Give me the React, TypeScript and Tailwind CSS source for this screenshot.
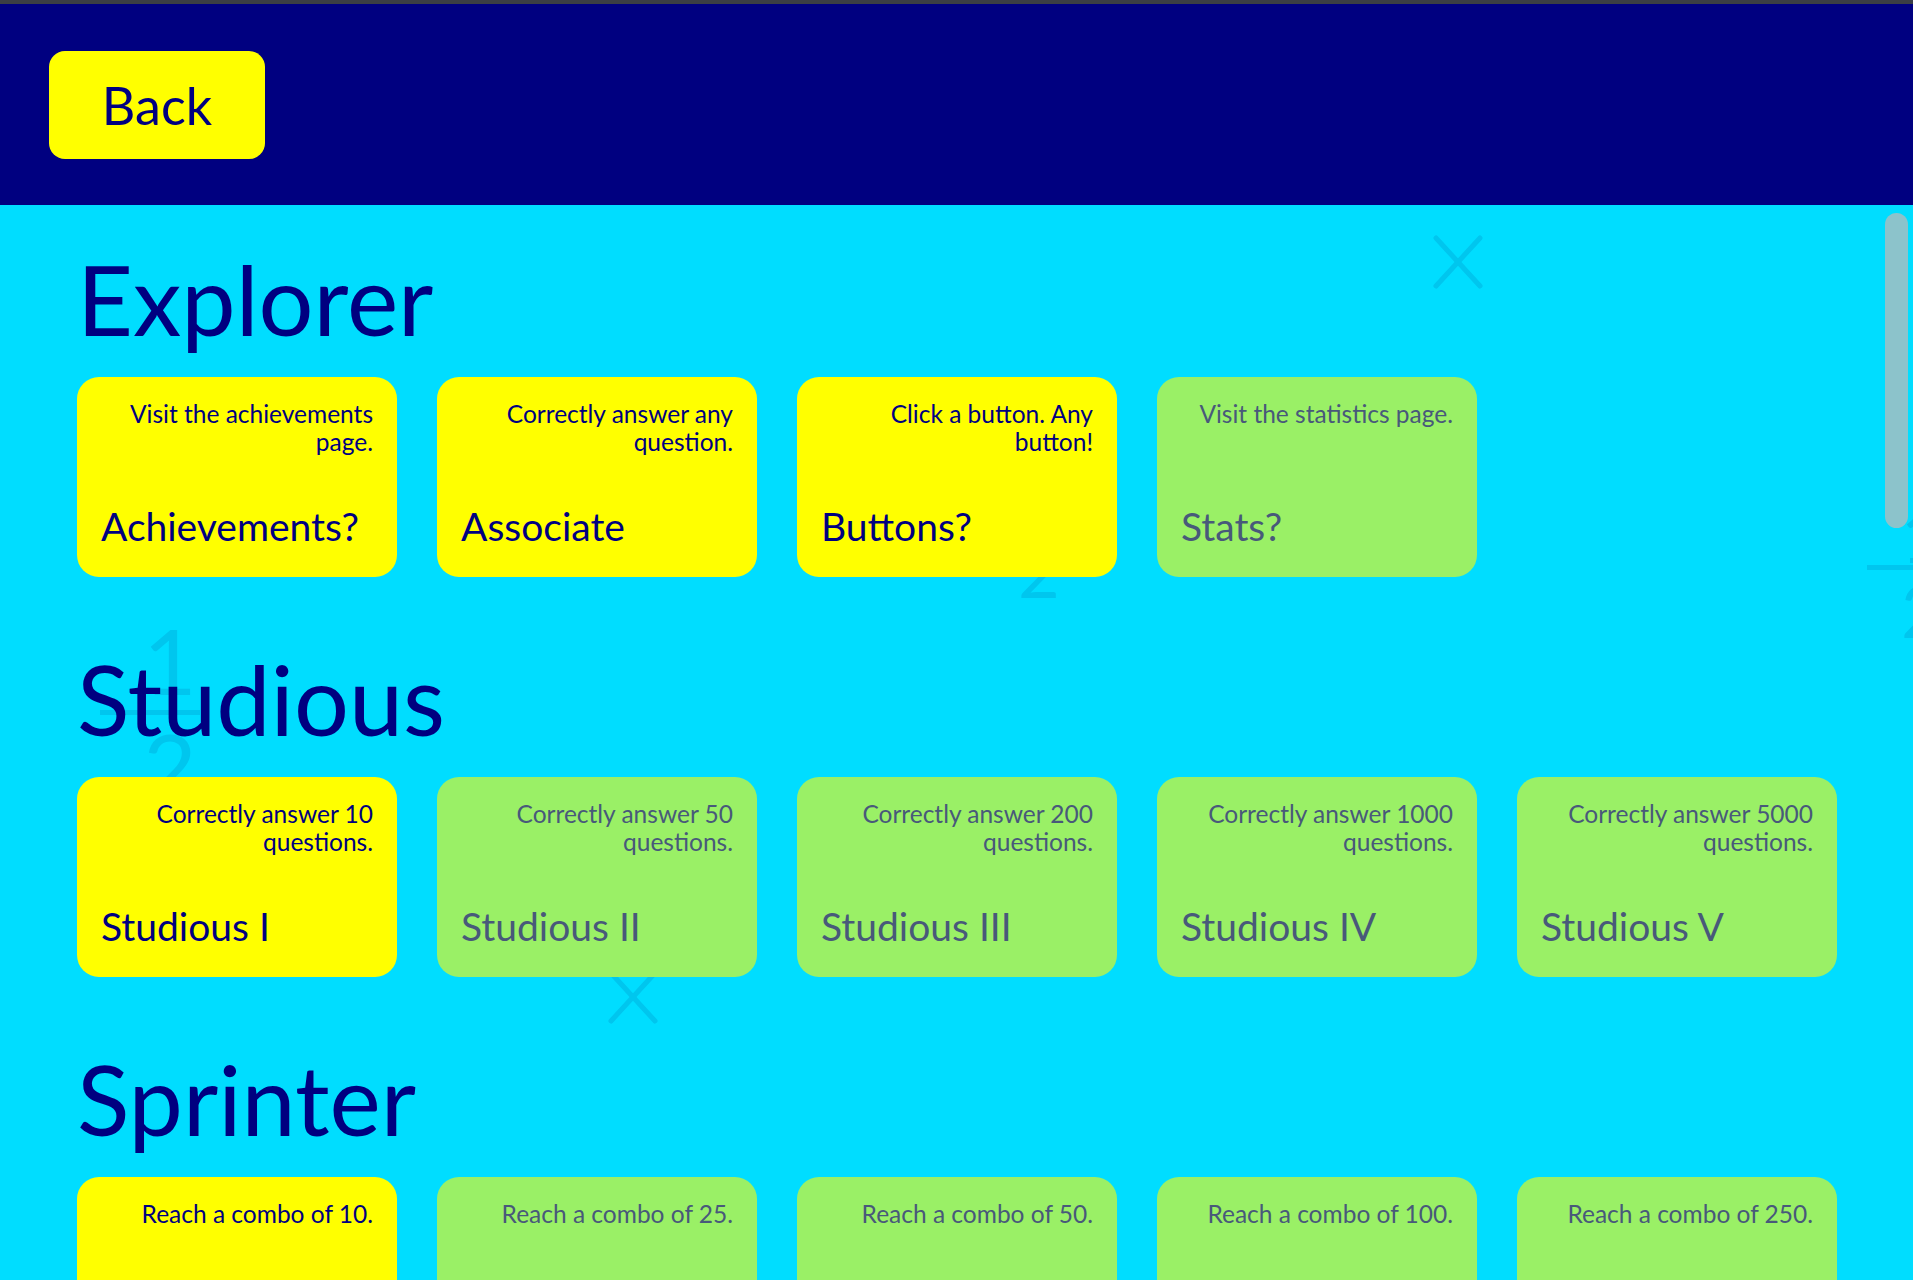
import React from 'react';

type Achievement = { title: string; desc: string; done: boolean };

const sections: { name: string; items: Achievement[] }[] = [
  {
    name: 'Explorer',
    items: [
      { title: 'Achievements?', desc: 'Visit the achievements page.', done: true },
      { title: 'Associate', desc: 'Correctly answer any question.', done: true },
      { title: 'Buttons?', desc: 'Click a button. Any button!', done: true },
      { title: 'Stats?', desc: 'Visit the statistics page.', done: false },
    ],
  },
  {
    name: 'Studious',
    items: [
      { title: 'Studious I', desc: 'Correctly answer 10 questions.', done: true },
      { title: 'Studious II', desc: 'Correctly answer 50 questions.', done: false },
      { title: 'Studious III', desc: 'Correctly answer 200 questions.', done: false },
      { title: 'Studious IV', desc: 'Correctly answer 1000 questions.', done: false },
      { title: 'Studious V', desc: 'Correctly answer 5000 questions.', done: false },
    ],
  },
  {
    name: 'Sprinter',
    items: [
      { title: 'Sprinter I', desc: 'Reach a combo of 10.', done: true },
      { title: 'Sprinter II', desc: 'Reach a combo of 25.', done: false },
      { title: 'Sprinter III', desc: 'Reach a combo of 50.', done: false },
      { title: 'Sprinter IV', desc: 'Reach a combo of 100.', done: false },
      { title: 'Sprinter V', desc: 'Reach a combo of 250.', done: false },
    ],
  },
];

function Cross({ className }: { className: string }) {
  return (
    <svg className={className} viewBox="0 0 54 54" fill="none" stroke="currentColor" strokeWidth="5" strokeLinecap="round">
      <line x1="5" y1="3" x2="49" y2="51" />
      <line x1="49" y1="3" x2="5" y2="51" />
    </svg>
  );
}

function Card({ a }: { a: Achievement }) {
  return (
    <div
      className={`w-[320px] h-[200px] shrink-0 rounded-[22px] flex flex-col justify-between pt-[23px] pb-[31px] pl-[24px] pr-[24px] ${
        a.done ? 'bg-[#ffff00] text-[#000080]' : 'bg-[#9af066] text-[#48597a]'
      }`}
    >
      <p className="text-right text-[24.5px] leading-[28px] pl-[6px]">{a.desc}</p>
      <h3 className="text-[39px] leading-none">{a.title}</h3>
    </div>
  );
}

export default function App() {
  return (
    <div className="h-screen flex flex-col overflow-hidden font-['Lato','Open_Sans',sans-serif]">
      <div className="h-[4px] bg-[#3b3f45]" />
      <header className="h-[201px] shrink-0 bg-[#000080] flex items-center pl-[49px]">
        <button className="w-[216px] h-[108px] rounded-[16px] bg-[#ffff00] text-[#000080] text-[52px] leading-none">
          Back
        </button>
      </header>

      <main className="relative flex-1 overflow-hidden bg-[#00ddff]">
        {/* floating math symbols in the background */}
        <Cross className="absolute left-[1431px] top-[30px] w-[54px] h-[54px] text-[#00c6ee]" />
        <Cross className="absolute left-[606px] top-[765px] w-[54px] h-[54px] text-[#00c6ee]" />
        <span aria-hidden className="absolute left-[1018px] top-[329px] text-[72px] leading-none text-[#00c6ee]">2</span>
        <div aria-hidden className="absolute left-[100px] top-[405px] w-[100px] flex flex-col items-center text-[#00c6ee]">
          <span className="text-[92px] leading-[100px] pl-[40px]">1</span>
          <div className="w-[100px] h-[5px] bg-[#00c6ee]" />
          <span className="text-[92px] leading-[100px] pl-[40px]">2</span>
        </div>
        <div aria-hidden className="absolute left-[1867px] top-[300px] w-[80px] flex flex-col items-start text-[#00c6ee]">
          <span className="text-[72px] leading-[60px] pl-[34px]">1</span>
          <div className="w-[80px] h-[5px] bg-[#00c6ee]" />
          <span className="text-[72px] leading-[80px] pl-[34px]">2</span>
        </div>

        <div className="relative pl-[77px] pt-[46px]">
          {sections.map((s) => (
            <section key={s.name} className="mb-[74px]">
              <h2 className="text-[97px] leading-[96px] text-[#000080] mb-[30px]">{s.name}</h2>
              <div className="flex gap-[40px]">
                {s.items.map((a) => (
                  <Card key={a.title} a={a} />
                ))}
              </div>
            </section>
          ))}
        </div>

        {/* scrollbar thumb */}
        <div className="absolute left-[1885px] top-[8px] w-[23px] h-[315px] rounded-full bg-[#8cc3cb]" />
      </main>
    </div>
  );
}
